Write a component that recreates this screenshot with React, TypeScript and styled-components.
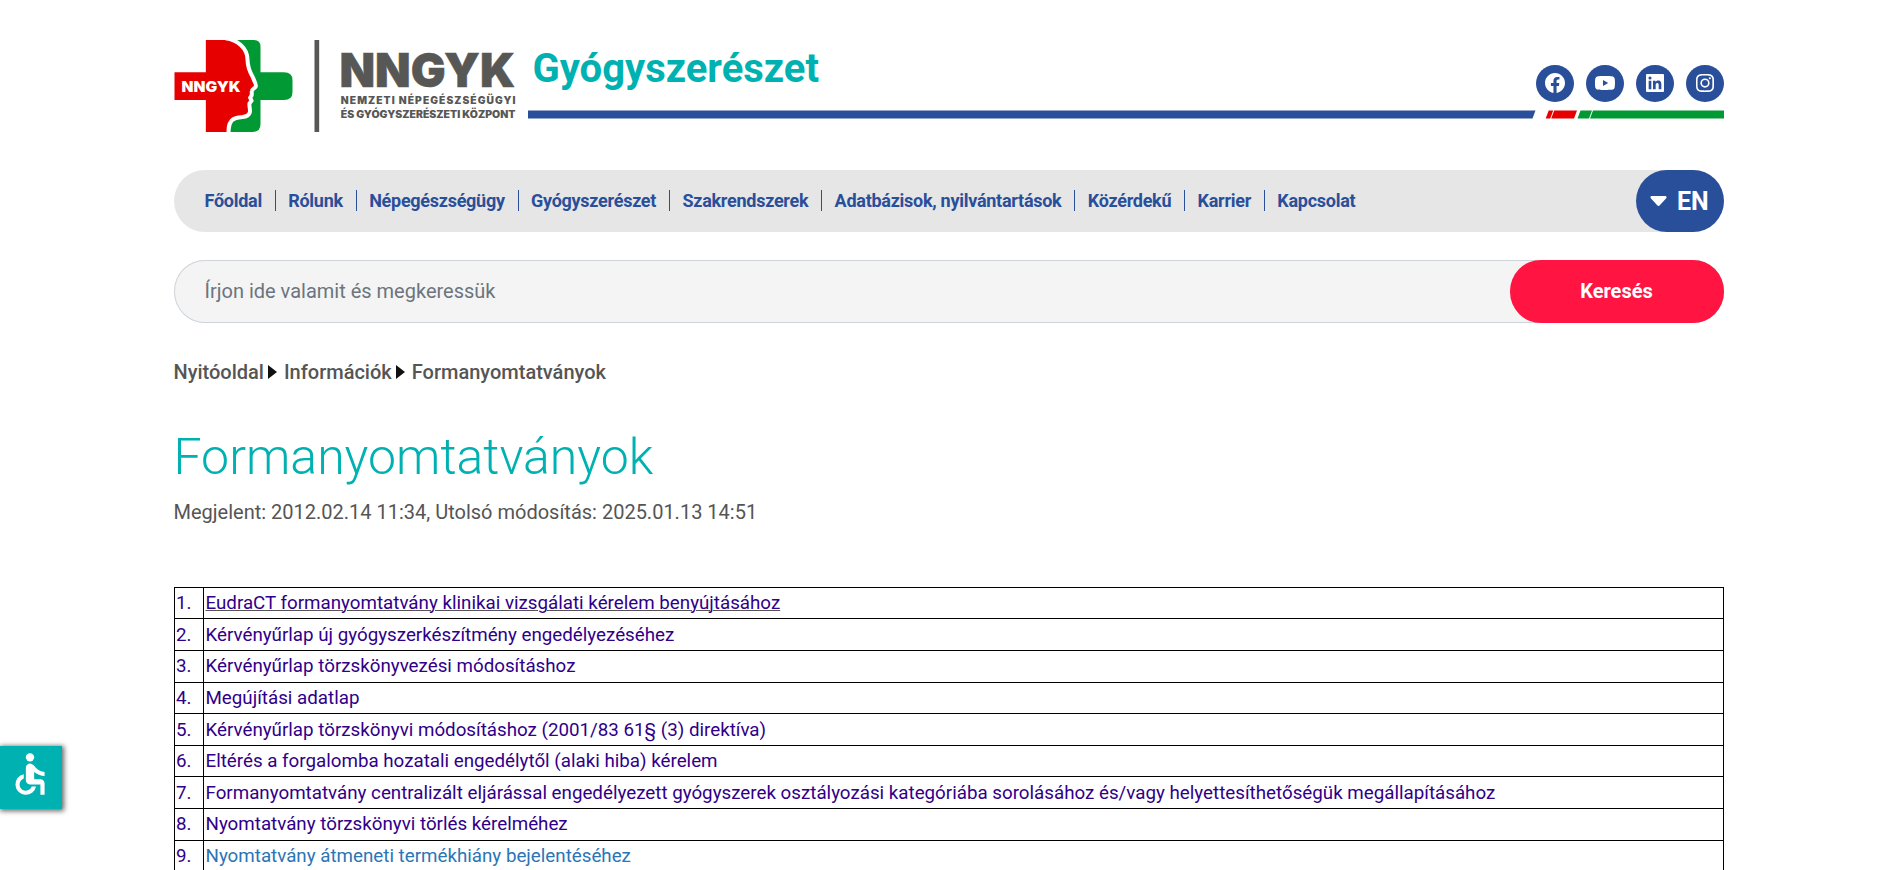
import React from 'react';
import styled, { createGlobalStyle } from 'styled-components';
import { BiLogoFacebookCircle, BiLogoYoutube, BiLogoLinkedinSquare, BiLogoInstagram } from 'react-icons/bi';
import { MdAccessible } from 'react-icons/md';

const Global = createGlobalStyle`
  * { box-sizing: border-box; }
  body { margin: 0; background: #fff; font-family: Roboto, "Liberation Sans", sans-serif; color: #555; overflow: hidden; }
  #root { height: 870px; overflow: hidden; }
`;
const Page = styled.main`
  width: 1550px;
  margin: 0 auto;
  padding-top: 40px;
`;
const Header = styled.header`
  display: flex;
  height: 92px;
  margin-bottom: 38px;
`;
const Logo = styled.svg`
  width: 354px;
  height: 92px;
  flex: none;
  overflow: visible;
`;
const HeaderMain = styled.div`
  flex: 1;
  display: flex;
  flex-direction: column;
`;
const HeaderTop = styled.div`
  display: flex;
  justify-content: space-between;
  height: 70px;
`;
const SiteName = styled.div`
  margin: 5px 0 0 5px;
  font-size: 40px;
  line-height: 48px;
  font-weight: 700;
  color: #00b1b2;
`;
const Socials = styled.div`
  display: flex;
  gap: 12px;
  padding-top: 24.5px;
`;
const Social = styled.a`
  display: flex;
  align-items: center;
  justify-content: center;
  width: 38px;
  height: 37.5px;
  border-radius: 50%;
  background: #2a4f9a;
  color: #fff;
  font-size: 24px;
`;
const Stripe = styled.svg`
  display: block;
  width: 1196px;
  height: 9px;
`;
const Nav = styled.nav`
  display: flex;
  justify-content: space-between;
  height: 62px;
  border-radius: 31px;
  background: #e6e6e6;
`;
const Menu = styled.ul`
  display: flex;
  align-items: center;
  list-style: none;
  margin: 0;
  padding: 0 0 1px 18.5px;
`;
const MenuItem = styled.li`
  padding: 0 12.8px 0 12.5px;
  font-size: 18px;
  line-height: 21px;
  font-weight: 700;
  letter-spacing: -0.27px;
  color: #2a4f9a;
  & + & { border-left: 1px solid #2a4f9a; }
`;
const Lang = styled.button`
  display: flex;
  align-items: center;
  gap: 10px;
  width: 88px;
  padding: 0 0 0 14.5px;
  border: 0;
  border-radius: 31px;
  background: #2a4f9a;
  color: #fff;
  font: 700 25px Roboto, sans-serif;
`;
const Search = styled.form`
  display: flex;
  justify-content: space-between;
  height: 63px;
  margin-top: 28px;
  border-radius: 31px;
  background: #f4f4f4;
  box-shadow: inset 0 0 0 1px #ced4da;
`;
const Field = styled.input`
  flex: 1;
  padding: 0 0 2px 31px;
  border: 0;
  background: none;
  font: 400 20px Roboto, sans-serif;
  &::placeholder { color: #6c757d; opacity: 1; }
`;
const Submit = styled.button`
  width: 214px;
  padding: 0 0 2px;
  border: 0;
  border-radius: 31px;
  background: #ff1442;
  color: #fff;
  font: 700 20px Roboto, sans-serif;
`;
const Crumbs = styled.div`
  display: flex;
  align-items: center;
  height: 30px;
  margin-top: 34px;
  font-size: 20px;
  font-weight: 500;
`;
const Arrow = styled.span`
  margin: 0 7px 0 4px;
  border-left: 9px solid #111;
  border-top: 7px solid transparent;
  border-bottom: 7px solid transparent;
`;
const Title = styled.h1`
  margin: 40px 0 0;
  font-size: 50px;
  line-height: 60px;
  font-weight: 300;
  color: #00b1b2;
`;
const Dates = styled.p`
  margin: 10px 0 0;
  font-size: 20px;
  line-height: 30px;
`;
const Table = styled.table`
  width: 100%;
  margin-top: 59.7px;
  border-collapse: collapse;
  border: 1px solid #000;
  color: #30008a;
`;
const Cell = styled.td<{ $num?: boolean }>`
  width: ${p => (p.$num ? '29px' : 'auto')};
  height: 31.625px;
  padding: 1px 1px 1px ${p => (p.$num ? '1.4px' : '2px')};
  border: 1px solid #000;
  font-size: 18.75px;
  line-height: 28px;
`;
const Link = styled.a<{ $tone?: 'fresh' | 'underlined' }>`
  color: ${p => (p.$tone === 'fresh' ? '#2b75b5' : '#30008a')};
  text-decoration: ${p => (p.$tone === 'underlined' ? 'underline 1px #555' : 'none')};
`;
const Access = styled.button`
  position: fixed;
  left: 0;
  top: 746px;
  width: 62px;
  height: 63px;
  display: flex;
  align-items: center;
  justify-content: center;
  padding: 0 3px 8px 0;
  border: 0;
  background: #00b1b2;
  color: #fff;
  font-size: 50px;
  box-shadow: 1px 1px 5px 1px rgba(0, 0, 0, 0.6);
`;

const menu = ['Főoldal', 'Rólunk', 'Népegészségügy', 'Gyógyszerészet', 'Szakrendszerek', 'Adatbázisok, nyilvántartások', 'Közérdekű', 'Karrier', 'Kapcsolat'];
const rows: { text: string; tone?: 'fresh' | 'underlined' }[] = [
  { text: 'EudraCT formanyomtatvány klinikai vizsgálati kérelem benyújtásához', tone: 'underlined' },
  { text: 'Kérvényűrlap új gyógyszerkészítmény engedélyezéséhez' },
  { text: 'Kérvényűrlap törzskönyvezési módosításhoz' },
  { text: 'Megújítási adatlap' },
  { text: 'Kérvényűrlap törzskönyvi módosításhoz (2001/83 61§ (3) direktíva)' },
  { text: 'Eltérés a forgalomba hozatali engedélytől (alaki hiba) kérelem' },
  { text: 'Formanyomtatvány centralizált eljárással engedélyezett gyógyszerek osztályozási kategóriába sorolásához és/vagy helyettesíthetőségük megállapításához' },
  { text: 'Nyomtatvány törzskönyvi törlés kérelméhez' },
  { text: 'Nyomtatvány átmeneti termékhiány bejelentéséhez', tone: 'fresh' },
];

const face = 'M195 40 C232 45 260 70 261 103 C261 128 270 145 277 157 C281 167 288 179 286 184 C284 190 275 191 274 198 C273 204 275 207 273 212 L269 218 L273 227 L267 235 C265 242 270 252 268 262 C265 272 255 275 246 276 C232 277 222 278 213 287 C204 298 204 310 204 326';

const LogoMark = () => (
  <Logo viewBox="40.5 45 1062 276" fontFamily="Inter" fontWeight="900">
    <path fill="#009933" d="M204 45H280Q300 45 300 65V142H370Q396 142 396 166V201Q396 225 370 225H300V298Q300 321 276 321H204Z" />
    <path fill="#e60000" d="M136 45H205L220 50C245 60 261 80 261 103C261 128 270 145 277 157C281 167 288 179 286 184C284 190 275 191 274 198C273 204 275 207 273 212L269 218L273 227L267 235C265 242 270 252 268 262C265 272 255 275 246 276C232 277 222 278 213 287C204 298 204 310 204 321H136V225H42V142H136Z" />
    <path fill="none" stroke="#fff" strokeWidth="12" d={face} />
    <text x="63" y="199.5" fontSize="45" fill="#fff" textLength="177" lengthAdjust="spacingAndGlyphs">NNGYK</text>
    <rect x="462" y="45" width="14" height="276" fill="#575756" />
    <g fill="#575756">
      <text x="537" y="186" fontSize="139" stroke="#575756" strokeWidth="1.5" textLength="527" lengthAdjust="spacingAndGlyphs">NNGYK</text>
      <text x="541" y="237" fontSize="29" letterSpacing="3" textLength="527" lengthAdjust="spacingAndGlyphs">NEMZETI NÉPEGÉSZSÉGÜGYI</text>
      <text x="541" y="279" fontSize="29" textLength="524" lengthAdjust="spacingAndGlyphs">ÉS GYÓGYSZERÉSZETI KÖZPONT</text>
    </g>
  </Logo>
);

export default function App() {
  return (
    <>
      <Global />
      <Page>
        <Header>
          <LogoMark />
          <HeaderMain>
            <HeaderTop>
              <SiteName>Gyógyszerészet</SiteName>
              <Socials>
                <Social><BiLogoFacebookCircle /></Social>
                <Social><BiLogoYoutube /></Social>
                <Social><BiLogoLinkedinSquare /></Social>
                <Social><BiLogoInstagram /></Social>
              </Socials>
            </HeaderTop>
            <Stripe viewBox="0 0 1196 9">
              <path fill="#2a4f9a" d="M0 .6H1007.5L1004.5 8.5H0Z" />
              <path fill="#e60000" d="M1020.7 .6H1025.2L1022.2 8.5H1017.7ZM1026.2 .6H1049L1046 8.5H1023.2Z" />
              <path fill="#009933" d="M1052.5 .6H1064L1061 8.5H1049.5ZM1065 .6H1196V8.5H1062Z" />
            </Stripe>
          </HeaderMain>
        </Header>
        <Nav>
          <Menu>{menu.map(m => <MenuItem key={m}>{m}</MenuItem>)}</Menu>
          <Lang>
            <svg width="17" height="10" viewBox="0 0 17 10"><path fill="#fff" d="M1.5 0H15.5Q17.4 .8 16 2.4L10 9Q8.5 10.8 7 9L1 2.4Q-.4 .8 1.5 0Z" /></svg>
            EN
          </Lang>
        </Nav>
        <Search>
          <Field placeholder="Írjon ide valamit és megkeressük" />
          <Submit type="button">Keresés</Submit>
        </Search>
        <Crumbs>Nyitóoldal<Arrow />Információk<Arrow />Formanyomtatványok</Crumbs>
        <Title>Formanyomtatványok</Title>
        <Dates>Megjelent: 2012.02.14 11:34, Utolsó módosítás: 2025.01.13 14:51</Dates>
        <Table>
          <tbody>
            {rows.map((r, i) => (
              <tr key={i}>
                <Cell $num>{i + 1}.</Cell>
                <Cell><Link $tone={r.tone}>{r.text}</Link></Cell>
              </tr>
            ))}
          </tbody>
        </Table>
      </Page>
      <Access aria-label="Akadálymentesítés"><MdAccessible /></Access>
    </>
  );
}
